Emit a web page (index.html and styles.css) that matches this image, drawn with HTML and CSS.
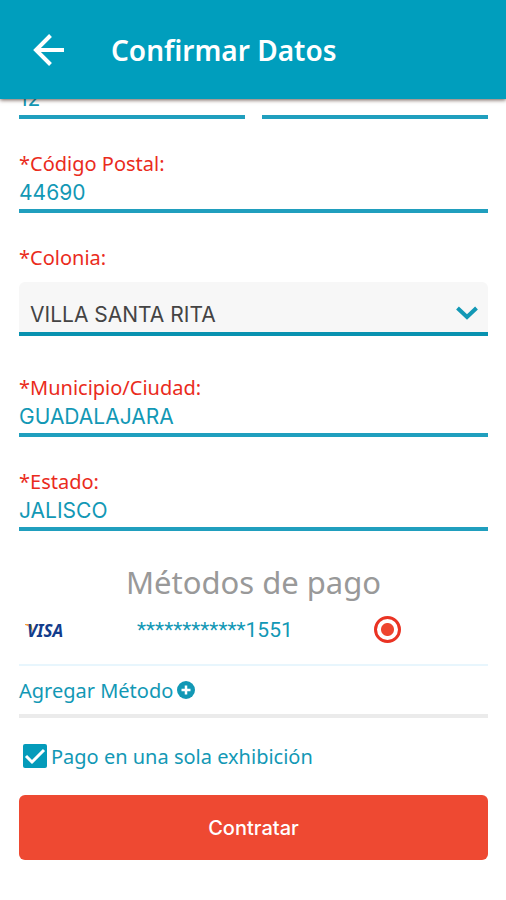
FILE: index.html
```html
<!DOCTYPE html>
<html lang="es">
<head>
<meta charset="utf-8">
<meta name="viewport" content="width=device-width, initial-scale=1">
<title>Confirmar Datos</title>
<link rel="stylesheet" href="styles.css">
</head>
<body>
<header class="topbar">
  <button class="back" type="button" aria-label="Volver">
    <svg width="32" height="32" viewBox="0 0 32 32" fill="none" stroke="currentColor" stroke-width="4"><path d="M31 16H4M17.500 1.500L3 16L17.500 30.500"/></svg>
  </button>
  <h1 class="title">Confirmar Datos</h1>
</header>
<form class="form">
  <div class="pair">
    <input class="value" type="text" value="12" aria-label="Número exterior">
    <input class="value" type="text" aria-label="Número interior">
  </div>
  <div class="field">
    <label class="label" for="cp">*Código Postal:</label>
    <input class="value" id="cp" type="text" value="44690">
  </div>
  <div class="field">
    <label class="label" for="colonia">*Colonia:</label>
    <div class="picker">
      <select class="select" id="colonia"><option>VILLA SANTA RITA</option></select>
      <svg class="chevron" width="22" height="14" viewBox="0 0 22 14" fill="none" stroke="currentColor" stroke-width="4"><path d="M1.500 2L11 11L20.500 2"/></svg>
    </div>
  </div>
  <div class="field">
    <label class="label" for="ciudad">*Municipio/Ciudad:</label>
    <input class="value" id="ciudad" type="text" value="GUADALAJARA">
  </div>
  <div class="field">
    <label class="label" for="estado">*Estado:</label>
    <input class="value" id="estado" type="text" value="JALISCO">
  </div>
  <h2 class="subtitle">Métodos de pago</h2>
  <div class="card">
    <svg class="visa" width="44" height="22" viewBox="0 0 44 22" role="img" aria-label="VISA">
      <path d="M0 5H5Q7 5 7 8L8 13Q5 7 0 6Z" fill="#f3a13b"/>
      <text class="visa-text" x="2" y="18">VISA</text>
    </svg>
    <label class="number" for="tarjeta">************1551</label>
    <input class="radio" id="tarjeta" type="radio" name="tarjeta" checked>
  </div>
  <button class="add" type="button">Agregar Método<svg width="18" height="18" viewBox="0 0 18 18"><circle cx="9" cy="9" r="9" fill="currentColor"/><path d="M9 4.500V13.500M4.500 9H13.500" stroke="#fff" stroke-width="2.500"/></svg></button>
  <div class="single">
    <input class="check" id="pago" type="checkbox" checked>
    <label for="pago">Pago en una sola exhibición</label>
  </div>
  <button class="submit" type="button">Contratar</button>
</form>
</body>
</html>
```
FILE: styles.css
```css
* { box-sizing: border-box; }
body {
  margin: 0;
  background: #fff;
  color: #1298b5;
  font-family: "Noto Sans", sans-serif;
  font-size: 20px;
}
input, select, button { margin: 0; padding: 0; border: 0; border-radius: 0; font: inherit; color: inherit; background: none; appearance: none; }
svg { display: block; flex: none; }

.topbar {
  position: sticky;
  top: 0;
  z-index: 1;
  display: flex;
  align-items: center;
  gap: 46px;
  height: 99px;
  padding-left: 33px;
  background: #009ebd;
  box-shadow: 0 1px 4px rgba(60, 30, 20, .75);
  color: #fff;
}
.title { margin: 0; font-size: 28px; line-height: 40px; font-weight: 600; }

.form { display: flex; flex-direction: column; padding: 0 18px 24px 19px; }
.pair { display: grid; grid-template-columns: 1fr 1fr; gap: 17px; margin-top: -17px; }
.value {
  display: block;
  width: 100%;
  height: 37px;
  border-bottom: 4px solid #209fbe;
  font-family: Inter, sans-serif;
  font-size: 21px;
}
.field { margin-top: 33px; }
.label { display: block; line-height: 24px; color: #ea2b1c; }
.picker { position: relative; margin-top: 12px; }
.select {
  display: block;
  width: 100%;
  height: 54px;
  padding: 16px 40px 0 11px;
  border-bottom: 4px solid #0892b0;
  border-radius: 6px 6px 0 0;
  background: #f7f7f7;
  color: #444;
  font-family: Inter, sans-serif;
  font-size: 21px;
  line-height: 28px;
}
.chevron { position: absolute; right: 10px; top: 24px; pointer-events: none; }
.field:has(.picker) + .field { margin-top: 40px; }

.subtitle { margin: 32px 0 0; color: #999; font-size: 31px; line-height: 38px; font-weight: 400; text-align: center; }
.card { display: grid; grid-template-columns: 118px 217px 1fr; align-items: center; height: 65px; padding-bottom: 6px; border-bottom: 2px solid #e8f6fd; }
.number { font-family: Roboto, sans-serif; font-size: 21px; }
.visa { margin-left: 6px; }
.visa-text { fill: #123c8c; font: italic 700 17px "Noto Sans", sans-serif; }
.radio { width: 27px; height: 27px; border: 3px solid #ea3323; border-radius: 50%; background: radial-gradient(circle, #ee452f 6px, #fff 7px); }
.radio { justify-self: start; margin-left: 20px; }
.add { display: flex; align-items: center; gap: 4px; height: 52px; border-bottom: 4px solid #ebebeb; }
.single { display: flex; align-items: center; gap: 4px; height: 26px; margin-top: 25px; padding-left: 4px; }
.check {
  width: 24px;
  height: 24px;
  border-radius: 2px;
  background: #049bba url("data:image/svg+xml,%3Csvg xmlns='http://www.w3.org/2000/svg' viewBox='0 0 24 24' fill='none' stroke='white' stroke-width='3'%3E%3Cpath d='M3 12L9 18L21 6'/%3E%3C/svg%3E");
}
.submit { height: 65px; margin-top: 26px; border-radius: 6px; background: #ee4932; color: #fff; font-family: Inter, sans-serif; font-weight: 500; }
```
